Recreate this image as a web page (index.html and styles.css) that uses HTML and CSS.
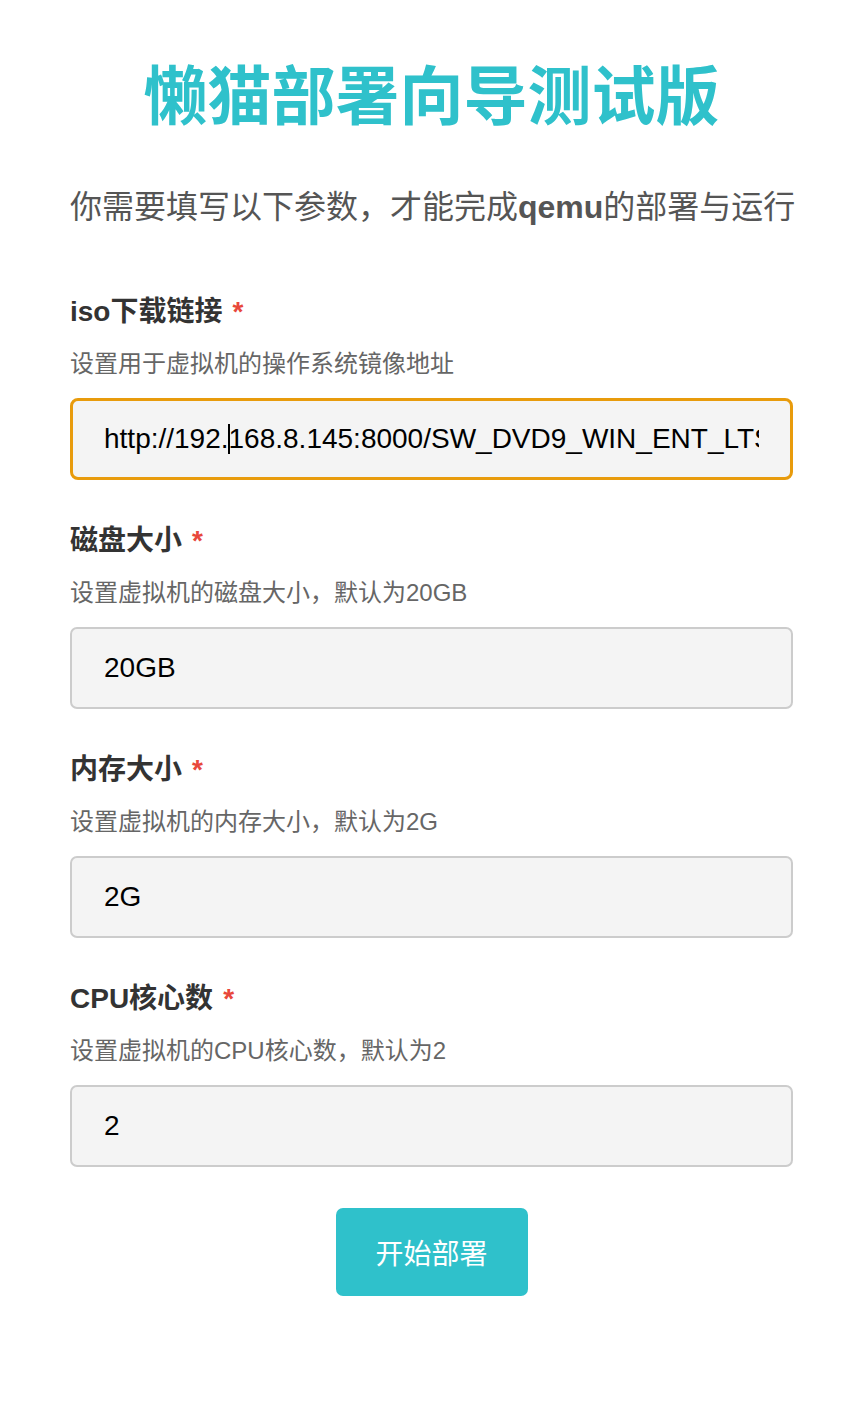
FILE: index.html
```html
<!DOCTYPE html>
<html lang="zh-CN">
<head>
<meta charset="utf-8">
<title>懒猫部署向导测试版</title>
<link rel="stylesheet" href="styles.css">
</head>
<body>
<main class="wizard">
  <h1 class="title">懒猫部署向导测试版</h1>
  <p class="subtitle">你需要填写以下参数，才能完成<strong class="em">qemu</strong>的部署与运行</p>
  <form class="form">
    <div class="field">
      <label class="label">iso下载链接<span class="req">*</span></label>
      <p class="desc">设置用于虚拟机的操作系统镜像地址</p>
      <div class="input-wrap">
        <input class="input input-focused" type="text" value="http://192.168.8.145:8000/SW_DVD9_WIN_ENT_LTSC_2021_64BIT_ChnSimp.iso">
        <span class="caret"></span>
      </div>
    </div>
    <div class="field">
      <label class="label">磁盘大小<span class="req">*</span></label>
      <p class="desc">设置虚拟机的磁盘大小，默认为20GB</p>
      <input class="input" type="text" value="20GB">
    </div>
    <div class="field">
      <label class="label">内存大小<span class="req">*</span></label>
      <p class="desc">设置虚拟机的内存大小，默认为2G</p>
      <input class="input" type="text" value="2G">
    </div>
    <div class="field">
      <label class="label">CPU核心数<span class="req">*</span></label>
      <p class="desc">设置虚拟机的CPU核心数，默认为2</p>
      <input class="input" type="text" value="2">
    </div>
    <div class="actions">
      <button class="btn" type="button">开始部署</button>
    </div>
  </form>
</main>
</body>
</html>
```
FILE: styles.css
```css
* { box-sizing: border-box; }
html, body { margin: 0; padding: 0; background: #ffffff; }
body {
  font-family: "Liberation Sans", Arial, "Noto Sans CJK SC", sans-serif;
}
.wizard {
  width: 723px;
  margin-left: 70px;
  padding-top: 57px;
  padding-bottom: 80px;
}
.title {
  margin: 0;
  font-size: 64px;
  line-height: 80px;
  font-weight: 700;
  color: #2fc1cb;
  text-align: center;
}
.subtitle {
  margin: 46px 0 0;
  font-size: 32px;
  line-height: 48px;
  color: #555555;
  white-space: nowrap;
}
.em {
  font-weight: 700;
}
.form {
  display: flex;
  flex-direction: column;
  gap: 41px;
  margin-top: 61px;
}
.field {
  display: flex;
  flex-direction: column;
}
.label {
  font-size: 28px;
  line-height: 40px;
  font-weight: 700;
  color: #333333;
}
.req {
  color: #e8483b;
  margin-left: 10px;
}
.desc {
  margin: 16px 0 18px;
  font-size: 24px;
  line-height: 32px;
  color: #666666;
}
.input-wrap {
  position: relative;
}
.input {
  display: block;
  width: 100%;
  height: 82px;
  margin: 0;
  padding: 0 32px;
  border: 2px solid #cccccc;
  border-radius: 7px;
  background: #f4f4f4;
  font-family: "Liberation Sans", Arial, sans-serif;
  font-size: 28px;
  color: #000000;
  outline: none;
}
.input-focused {
  border: 3px solid #e89b0c;
  padding: 0 31px;
  border-radius: 8px;
}
.caret {
  position: absolute;
  left: 158px;
  top: 26px;
  width: 2px;
  height: 30px;
  background: #000000;
}
.actions {
  display: flex;
  justify-content: center;
}
.btn {
  width: 192px;
  height: 88px;
  border: none;
  border-radius: 7px;
  background: #2fc1cb;
  color: #ffffff;
  font-family: "Liberation Sans", "Noto Sans CJK SC", sans-serif;
  font-size: 28px;
  cursor: pointer;
}
```
